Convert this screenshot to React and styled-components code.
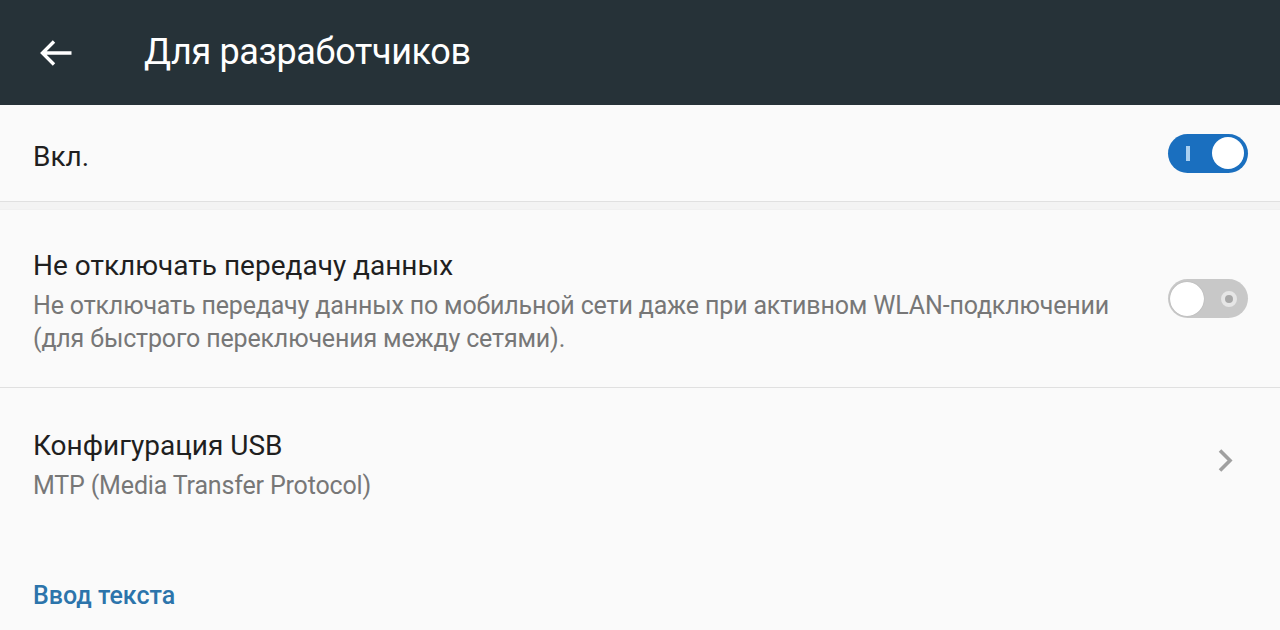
import React from "react";
import styled, { createGlobalStyle } from "styled-components";

const GlobalStyle = createGlobalStyle`
  html, body {
    margin: 0;
    padding: 0;
    background: #fafafa;
  }
  body {
    font-family: Roboto, "Noto Sans", "DejaVu Sans", sans-serif;
    -webkit-font-smoothing: antialiased;
  }
`;

const Screen = styled.div`
  width: 1280px;
  height: 630px;
  overflow: hidden;
  background: #fafafa;
`;

const Toolbar = styled.header`
  height: 105px;
  background: #263238;
  display: flex;
  align-items: center;
  padding-left: 40px;
  box-sizing: border-box;
`;

const BackButton = styled.div`
  width: 32px;
  height: 32px;
  display: flex;
  align-items: center;
  justify-content: center;
  margin-right: 72px;
`;

const Title = styled.h1`
  margin: 0;
  color: #ffffff;
  font-size: 36px;
  line-height: 105px;
  font-weight: 400;
  letter-spacing: -0.35px;
`;

const Row = styled.div`
  display: flex;
  align-items: center;
  padding: 0 32px 0 33px;
  height: ${(p) => p.$height}px;
  box-sizing: border-box;
`;

const TextBlock = styled.div`
  flex: 1;
  display: flex;
  flex-direction: column;
  padding-top: ${(p) => p.$shift || 0}px;
  padding-right: 40px;
`;

const RowTitle = styled.div`
  color: #1f1f1f;
  font-size: 28px;
  line-height: 38px;
`;

const RowSummary = styled.div`
  color: #777777;
  font-size: 25px;
  line-height: 33px;
  letter-spacing: -0.16px;
  margin-top: 4px;
`;

const Divider = styled.div`
  height: 7px;
  background: #f3f3f3;
  border-top: 1px solid #e0e0e0;
  border-bottom: 1px solid #f0f0f0;
`;

const ThinDivider = styled.div`
  height: 1px;
  background: #e0e0e0;
`;

const Category = styled.div`
  color: #2c74ab;
  font-size: 25px;
  font-weight: 500;
  padding: 37px 33px 0;
  line-height: 38px;
`;

const Track = styled.div`
  width: 80px;
  height: 39px;
  border-radius: 20px;
  background: ${(p) => (p.$on ? "#1a6fbf" : "#c8c8c8")};
  position: relative;
  flex-shrink: 0;
`;

const Knob = styled.div`
  position: absolute;
  top: ${(p) => (p.$on ? 3.5 : 2.5)}px;
  ${(p) => (p.$on ? "right: 4px;" : "left: 2px;")}
  width: ${(p) => (p.$on ? 32 : 34)}px;
  height: ${(p) => (p.$on ? 32 : 34)}px;
  border-radius: 50%;
  background: #ffffff;
  box-shadow: ${(p) => (p.$on ? "none" : "0 0 1px rgba(0, 0, 0, 0.25)")};
`;

const OnMark = styled.div`
  position: absolute;
  left: 18px;
  top: 12px;
  width: 4px;
  height: 15px;
  background: #a9cff0;
`;

const OffMark = styled.div`
  position: absolute;
  right: 11px;
  top: 12px;
  width: 16px;
  height: 16px;
  border-radius: 50%;
  background: #a8a8a8;
  box-sizing: border-box;
  border: 4px solid #e6e6e6;
`;

function Switch({ on }) {
  return (
    <Track $on={on}>
      {on ? <OnMark /> : <OffMark />}
      <Knob $on={on} />
    </Track>
  );
}

const Chevron = styled.svg`
  width: 24px;
  height: 26px;
  margin: 0 10px 7px 0;
  flex-shrink: 0;
`;

export default function App() {
  return (
    <Screen>
      <GlobalStyle />
      <Toolbar>
        <BackButton>
          <svg width="32" height="26" viewBox="0 0 32 26">
            <path
              d="M31.5 13H3M14 1.5L2.5 13L14 24.5"
              fill="none"
              stroke="#ffffff"
              strokeWidth="3.4"
            />
          </svg>
        </BackButton>
        <Title>Для разработчиков</Title>
      </Toolbar>

      <Row $height={96}>
        <TextBlock $shift={7}>
          <RowTitle>Вкл.</RowTitle>
        </TextBlock>
        <Switch on />
      </Row>
      <Divider />

      <Row $height={177}>
        <TextBlock $shift={4}>
          <RowTitle>Не отключать передачу данных</RowTitle>
          <RowSummary>
            Не отключать передачу данных по мобильной сети даже при активном
            WLAN-подключении (для быстрого переключения между сетями).
          </RowSummary>
        </TextBlock>
        <Switch on={false} />
      </Row>
      <ThinDivider />

      <Row $height={152}>
        <TextBlock>
          <RowTitle>Конфигурация USB</RowTitle>
          <RowSummary>MTP (Media Transfer Protocol)</RowSummary>
        </TextBlock>
        <Chevron viewBox="0 0 24 26">
          <path
            d="M6 2.5L16 12.5L6 22.5"
            fill="none"
            stroke="#a0a0a0"
            strokeWidth="3.6"
          />
        </Chevron>
      </Row>

      <Category>Ввод текста</Category>
    </Screen>
  );
}
